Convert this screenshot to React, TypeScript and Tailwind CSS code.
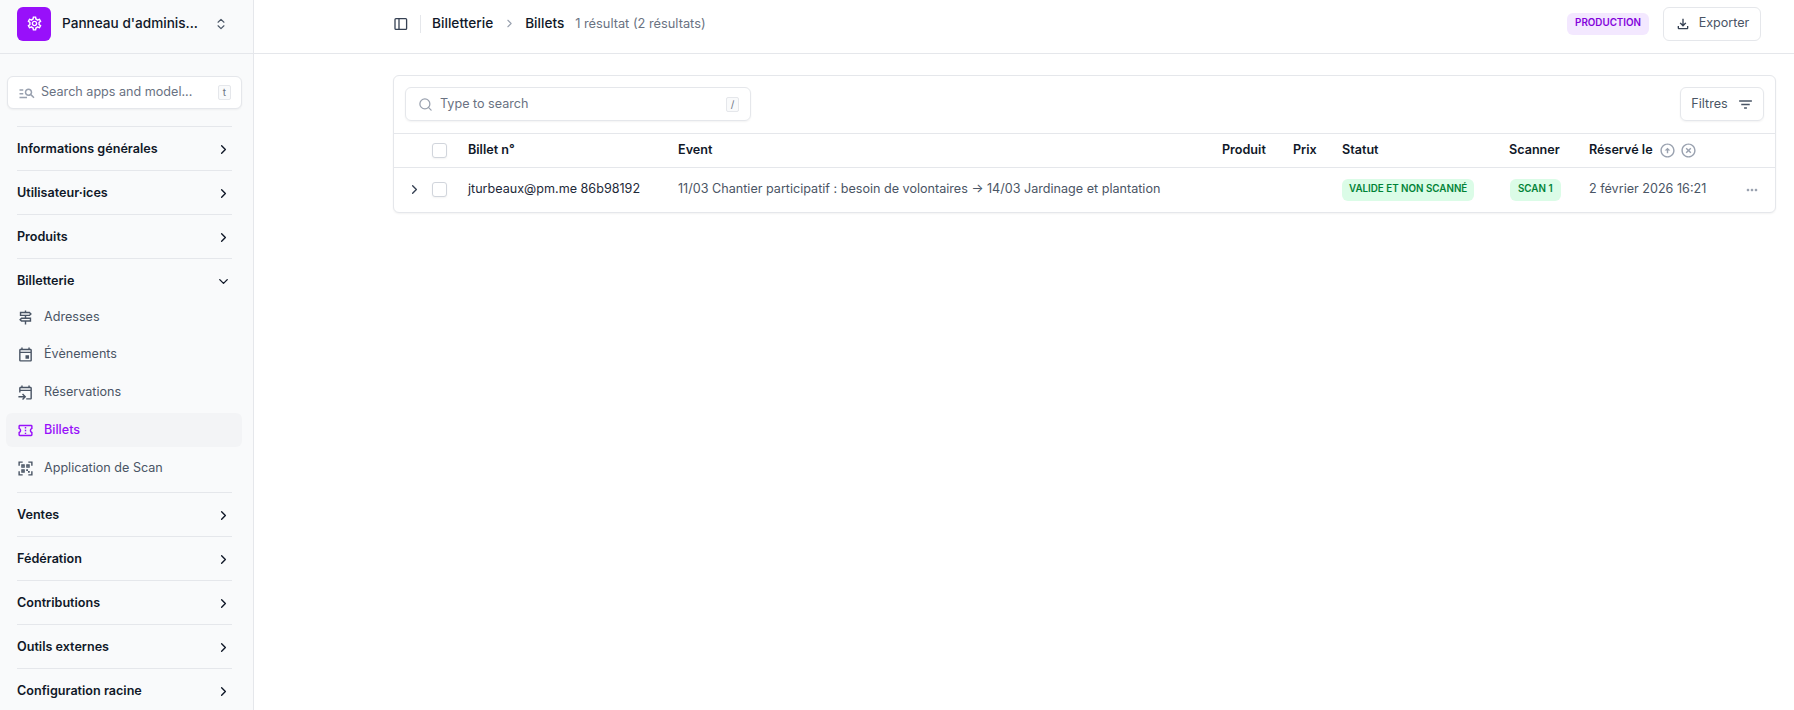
import { ChevronRight, ChevronDown, ChevronsUpDown, Search } from "lucide-react";
import {
  MdOutlineSignpost,
  MdOutlineEvent,
  MdOutlineConfirmationNumber,
  MdManageSearch,
  MdFilterList,
  MdOutlineFileDownload,
  MdMoreHoriz,
  MdOutlineArrowCircleUp,
  MdHighlightOff,
  MdOutlineSettings,
} from "react-icons/md";

const sectionsTop = ["Informations générales", "Utilisateur·ices", "Produits"];
const sectionsBottom = ["Ventes", "Fédération", "Contributions", "Outils externes", "Configuration racine"];

function EventUpcomingIcon() {
  return (
    <svg viewBox="0 0 24 24" className="w-[17px] h-[17px]" fill="currentColor">
      <path d="M19 4h-1V2h-2v2H8V2H6v2H5c-1.1 0-2 .9-2 2v6h2v-2h14v10h-6v2h6c1.1 0 2-.9 2-2V6c0-1.1-.9-2-2-2zM5 8V6h14v2H5z" />
      <path d="M8.5 13.5 7.1 14.9 9.2 17H2v2h7.2l-2.1 2.1 1.4 1.4L13 18z" />
    </svg>
  );
}

function QrScanIcon() {
  return (
    <svg viewBox="0 0 24 24" className="w-[17px] h-[17px]" fill="currentColor">
      <path d="M2 8V2h6v2H4v4H2zM16 2h6v6h-2V4h-4V2zM2 16h2v4h4v2H2v-6zM20 16h2v6h-6v-2h4v-4z" />
      <path d="M6 6h5v5H6zM13 6h5v5h-5zM6 13h5v5H6zM13 13h2.5v2.5H13zM15.5 15.5H18V18h-2.5z" />
      <path d="M8 8h1v1H8zM15 8h1v1h-1zM8 15h1v1H8z" fill="#f9fafb" />
    </svg>
  );
}

function SidebarToggleIcon() {
  return (
    <svg viewBox="0 0 14 14" className="w-[14px] h-[14px]" fill="none" stroke="currentColor" strokeWidth="1.3">
      <rect x="1" y="1.6" width="11.6" height="10.8" rx="1" />
      <path d="M5 1.6v10.8" />
    </svg>
  );
}

function NavSection({ label, open }: { label: string; open?: boolean }) {
  return (
    <div className="ml-[17px] mr-[21px] h-[44px] shrink-0 border-t border-gray-200 flex items-center justify-between pr-[1px] pt-[1px] text-[12.6px] font-semibold text-gray-900">
      <span>{label}</span>
      {open ? <ChevronDown className="w-[15px] h-[15px]" strokeWidth={2.2} /> : <ChevronRight className="w-[15px] h-[15px]" strokeWidth={2.2} />}
    </div>
  );
}

function NavItem({ icon, label, active }: { icon: React.ReactNode; label: string; active?: boolean }) {
  return (
    <div
      className={
        active
          ? "ml-[6px] mr-[11px] h-[34px] rounded-md bg-gray-100 flex items-center gap-[10px] px-[11px] text-[12.6px] font-medium text-purple-600"
          : "ml-[6px] mr-[11px] h-[34px] rounded-md flex items-center gap-[10px] px-[11px] text-[12.6px] text-gray-600"
      }
    >
      <span className="w-[17px] flex justify-center text-[17px]">{icon}</span>
      <span>{label}</span>
    </div>
  );
}

function Kbd({ children }: { children: string }) {
  return (
    <span className="w-[13px] h-[15px] border border-gray-200 rounded-[2px] bg-gray-50 text-[10px] leading-[13px] text-center text-gray-500">
      {children}
    </span>
  );
}

function Checkbox() {
  return <span className="block w-[15px] h-[15px] rounded-[3px] border border-gray-300 bg-white shadow-xs" />;
}

export default function App() {
  return (
    <div className="flex h-screen overflow-hidden bg-white font-['Inter',sans-serif]">
      <aside className="w-[254px] shrink-0 bg-gray-50 border-r border-gray-200 flex flex-col">
        <div className="h-[54px] shrink-0 border-b border-gray-200 flex items-center pl-[17px] pr-[25px] pb-[6px]">
          <div className="w-[34px] h-[34px] rounded-md bg-purple-600 flex items-center justify-center text-white text-[17px]">
            <MdOutlineSettings />
          </div>
          <span className="ml-[11px] flex-1 text-[13.6px] font-medium text-gray-900">Panneau d'adminis...</span>
          <ChevronsUpDown className="w-[14px] h-[14px] text-gray-600" />
        </div>

        <div className="ml-[7px] mr-[11px] mt-[22px] mb-[17px] h-[33px] shrink-0 rounded-md border border-gray-200 bg-white shadow-xs flex items-center pl-[10px] pr-[10px]">
          <MdManageSearch className="text-[18px] text-gray-400" />
          <span className="ml-[5px] flex-1 text-[12.6px] text-gray-500">Search apps and model...</span>
          <Kbd>t</Kbd>
        </div>

        {sectionsTop.map((s) => (
          <NavSection key={s} label={s} />
        ))}
        <NavSection label="Billetterie" open />
        <div className="flex flex-col gap-[3.75px] -mt-[2px] mb-[7px]">
          <NavItem icon={<MdOutlineSignpost />} label="Adresses" />
          <NavItem icon={<MdOutlineEvent />} label="Évènements" />
          <NavItem icon={<EventUpcomingIcon />} label="Réservations" />
          <NavItem icon={<MdOutlineConfirmationNumber />} label="Billets" active />
          <NavItem icon={<QrScanIcon />} label="Application de Scan" />
        </div>
        {sectionsBottom.map((s) => (
          <NavSection key={s} label={s} />
        ))}
      </aside>

      <div className="flex-1 min-w-0 flex flex-col">
        <header className="h-[54px] shrink-0 border-b border-gray-200 flex items-center pl-[140px] pr-[33px] pb-[6px]">
          <span className="text-gray-700">
            <SidebarToggleIcon />
          </span>
          <span className="w-px h-[18px] bg-gray-200 ml-[12px] mr-[11px]" />
          <span className="text-[13.7px] font-medium text-gray-900">Billetterie</span>
          <ChevronRight className="w-[13px] h-[13px] text-gray-400 mx-[9.5px]" />
          <span className="text-[13.6px] font-medium text-gray-900">Billets</span>
          <span className="ml-[11px] text-[12.8px] text-gray-500">1 résultat (2 résultats)</span>
          <div className="flex-1" />
          <span className="h-[22px] rounded-md bg-purple-100 px-[8px] flex items-center text-[9.8px] font-semibold text-purple-700">PRODUCTION</span>
          <button className="ml-[14px] h-[34px] w-[98px] rounded-md border border-gray-200 bg-white flex items-center justify-center gap-[8px] text-[12.6px] text-gray-600">
            <MdOutlineFileDownload className="text-[16px] text-gray-700" />
            Exporter
          </button>
        </header>

        <main className="ml-[139px] mr-[18px] mt-[21px]">
          <div className="rounded-md border border-gray-200 shadow-xs bg-white">
            <div className="h-[57px] flex items-center justify-between pl-[11px] pr-[11px] pb-[1px]">
              <div className="w-[346px] h-[34px] rounded-md border border-gray-200 shadow-xs flex items-center pl-[12px] pr-[11px]">
                <Search className="w-[15px] h-[15px] text-gray-400" />
                <span className="ml-[7px] flex-1 text-[12.6px] text-gray-500">Type to search</span>
                <Kbd>/</Kbd>
              </div>
              <button className="w-[84px] h-[34px] rounded-md border border-gray-200 shadow-xs flex items-center justify-center gap-[9px] pl-px text-[12.6px] text-gray-600">
                Filtres
                <MdFilterList className="text-[17px] text-gray-600" />
              </button>
            </div>
            <table className="w-full table-fixed text-[12.6px] text-left">
              <thead>
                <tr className="h-[34px] border-y border-gray-200 font-semibold text-gray-900">
                  <th className="w-[38px] font-semibold" />
                  <th className="w-[36px] font-semibold"><Checkbox /></th>
                  <th className="w-[210px] font-semibold">Billet n°</th>
                  <th className="w-[544px] font-semibold">Event</th>
                  <th className="w-[71px] font-semibold">Produit</th>
                  <th className="w-[49px] font-semibold">Prix</th>
                  <th className="w-[167px] font-semibold">Statut</th>
                  <th className="w-[80px] font-semibold">Scanner</th>
                  <th className="font-semibold">
                    <span className="flex items-center">
                      Réservé le
                      <MdOutlineArrowCircleUp className="ml-[6px] text-[17px] text-gray-400" />
                      <MdHighlightOff className="ml-[4px] text-[17px] text-gray-400" />
                    </span>
                  </th>
                  <th className="w-[31px] font-semibold" />
                </tr>
              </thead>
              <tbody>
                <tr className="h-[44px] text-gray-600">
                  <td className="pl-[13px]"><ChevronRight className="w-[15px] h-[15px] text-gray-700" strokeWidth={2.2} /></td>
                  <td><Checkbox /></td>
                  <td className="text-gray-800">jturbeaux@pm.me 86b98192</td>
                  <td className="whitespace-nowrap">11/03 Chantier participatif : besoin de volontaires → 14/03 Jardinage et plantation</td>
                  <td />
                  <td />
                  <td>
                    <span className="inline-flex h-[22px] items-center rounded-md bg-green-100 px-[7px] text-[9.8px] font-semibold text-green-700">VALIDE ET NON SCANNÉ</span>
                  </td>
                  <td>
                    <span className="ml-px inline-flex h-[22px] items-center rounded-md bg-green-100 px-[8px] text-[9.8px] font-semibold text-green-700">SCAN 1</span>
                  </td>
                  <td className="whitespace-nowrap">2 février 2026 16:21</td>
                  <td><MdMoreHoriz className="text-[16px] text-gray-400" /></td>
                </tr>
              </tbody>
            </table>
          </div>
        </main>
      </div>
    </div>
  );
}
